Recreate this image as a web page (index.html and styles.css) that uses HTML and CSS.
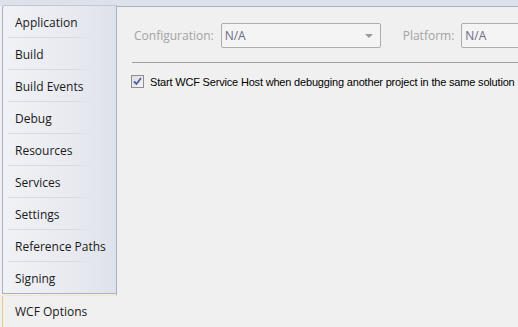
FILE: index.html
```html
<!DOCTYPE html>
<html>
<head>
<meta charset="utf-8">
<link rel="stylesheet" href="styles.css">
</head>
<body>
<div class="window">
  <div class="sidebar">
    <div class="tabs">
      <div class="tab">Application</div>
      <div class="tab">Build</div>
      <div class="tab">Build Events</div>
      <div class="tab">Debug</div>
      <div class="tab">Resources</div>
      <div class="tab">Services</div>
      <div class="tab">Settings</div>
      <div class="tab">Reference Paths</div>
      <div class="tab last">Signing</div>
    </div>
    <div class="tab selected">WCF Options</div>
  </div>
  <div class="content">
    <div class="config-row">
      <span class="label">Configuration:</span>
      <div class="combo combo-config">
        <span class="value">N/A</span>
        <span class="arrow"></span>
      </div>
      <span class="label platform-label">Platform:</span>
      <div class="combo combo-platform">
        <span class="value">N/A</span>
      </div>
    </div>
    <div class="separator"></div>
    <label class="check-row">
      <span class="checkbox">
        <svg width="9" height="9" viewBox="0 0 9 9"><path d="M1 4.5 L3.5 7 L8 1" fill="none" stroke="#4a5fa8" stroke-width="1.8"/></svg>
      </span>
      <span class="check-text">Start WCF Service Host when debugging another project in the same solution</span>
    </label>
  </div>
</div>
</body>
</html>
```
FILE: styles.css
```css
html, body {
  margin: 0;
  padding: 0;
}
body {
  width: 518px;
  height: 327px;
  overflow: hidden;
  background: #f0f0f0;
}
.window {
  display: flex;
  height: 327px;
  background: linear-gradient(#dde1ea, #dde1ea) top / 100% 6px no-repeat, #f0f0f0;
}
.sidebar {
  width: 117px;
  flex: none;
  display: flex;
  flex-direction: column;
  padding-top: 5px;
}
.tabs {
  margin-left: 2px;
  height: 289px;
  box-sizing: border-box;
  border: 1px solid #a7b0c6;
  border-top-color: #c2c8d6;
  border-radius: 3px 0 0 0;
  background: linear-gradient(to right, #f1f2f6 0%, #e8eaf0 60%, #dee2ea 100%);
  display: flex;
  flex-direction: column;
}
.tab {
  height: 32px;
  flex: none;
  display: flex;
  align-items: center;
  padding-left: 12px;
  font-family: "Open Sans", "Noto Sans", sans-serif;
  font-size: 12px;
  color: #1a1a1a;
  position: relative;
}
.tabs .tab::after {
  content: "";
  position: absolute;
  left: 5px;
  right: 20px;
  bottom: 0;
  height: 1px;
  background: linear-gradient(to right, #d8dbe3, #d4d8e0 70%, rgba(212,216,224,0));
}
.tabs .tab.last::after {
  display: none;
}
.tab.selected {
  margin-left: 2px;
  margin-top: 1px;
  height: 32px;
  box-sizing: border-box;
  border-left: 1px solid #e9c97e;
  border-top: 1px solid #f6e7c2;
  border-radius: 3px 0 0 0;
  background: #f0f0f0;
  padding-left: 12px;
}
.content {
  flex: 1;
  margin-top: 6px;
  border-top: 1px solid #a7b0c6;
  border-left: 1px solid #a7b0c6;
  height: 289px;
  margin-left: -1px;
  background: #f0f0f0;
  padding: 16px 0 0 17px;
  box-sizing: border-box;
  font-family: "Liberation Sans", Arial, sans-serif;
  font-size: 11px;
  min-width: 0;
}
.config-row {
  display: flex;
  align-items: center;
  height: 25px;
  white-space: nowrap;
}
.label {
  font-family: "Open Sans", "Noto Sans", sans-serif;
  font-size: 12px;
  color: #a3a3a3;
}
.combo {
  height: 25px;
  box-sizing: border-box;
  border: 1px solid #adadad;
  border-radius: 2px;
  background: #f4f4f4;
  display: flex;
  align-items: center;
  padding-left: 3px;
  position: relative;
  flex: none;
}
.combo .value {
  font-family: "Open Sans", "Noto Sans", sans-serif;
  font-size: 12px;
  color: #6d6b87;
}
.combo-config {
  width: 160px;
  margin-left: 7px;
}
.combo-platform {
  width: 80px;
  margin-left: 7px;
}
.platform-label {
  margin-left: 22px;
}
.arrow {
  position: absolute;
  right: 7px;
  top: 10px;
  width: 0;
  height: 0;
  border-left: 4px solid transparent;
  border-right: 4px solid transparent;
  border-top: 4px solid #9a9a9a;
}
.separator {
  height: 1px;
  background: #a0a0a0;
  margin: 14px 0 0 -2px;
}
.check-row {
  display: flex;
  align-items: center;
  margin-top: 12px;
  margin-left: -3px;
  white-space: nowrap;
}
.checkbox {
  width: 13px;
  height: 13px;
  box-sizing: border-box;
  border: 1px solid #8e8f8f;
  background: linear-gradient(135deg, #dcdcdc, #f6f6f6);
  display: flex;
  align-items: center;
  justify-content: center;
  flex: none;
}
.check-text {
  margin-left: 6px;
  color: #000;
  font-size: 11px;
  letter-spacing: -0.18px;
}
```
